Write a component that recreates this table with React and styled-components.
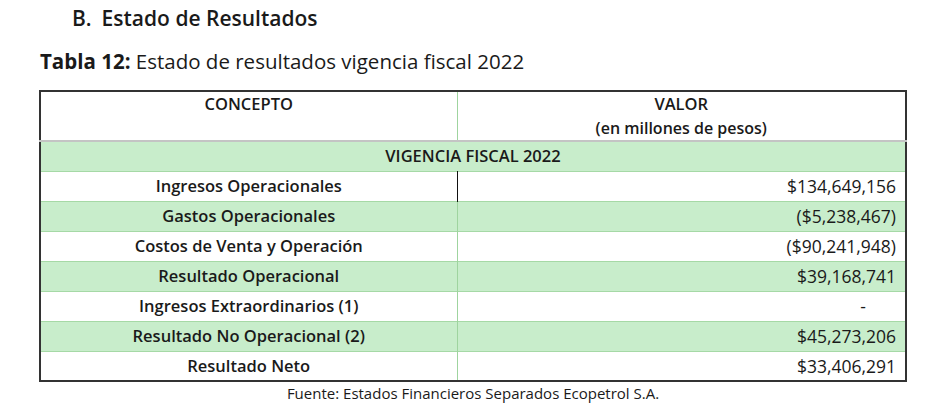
import styled, { createGlobalStyle } from 'styled-components';

const GlobalStyle = createGlobalStyle`
  body {
    margin: 0;
    background: #fff;
    font-family: 'Open Sans', 'Noto Sans', sans-serif;
    color: #1a1a1a;
  }
`;

const Page = styled.div`
  width: 949px;
  height: 416px;
  padding: 4px 0 0 39px;
  box-sizing: border-box;
`;

const Heading = styled.h2`
  margin: 0 0 0 33px;
  font-size: 21px;
  font-weight: 600;
  line-height: 28px;
  display: flex;
  gap: 10px;
`;

const Caption = styled.p`
  margin: 16px 0 0 1px;
  font-size: 20.5px;
  line-height: 27px;
  font-weight: 400;

  b {
    font-weight: 700;
  }
`;

const Table = styled.table`
  margin-top: 15px;
  width: 868px;
  border-collapse: collapse;
  border: 2px solid #333;
  font-size: 16.5px;
  line-height: 20px;

  td, th {
    box-sizing: border-box;
  }
`;

const HeadCell = styled.th`
  height: 47px;
  vertical-align: top;
  padding: 0;
  font-size: 16.5px;
  font-weight: 600;
  line-height: 24px;
  text-align: center;
  border-bottom: 2px solid #c4c4c4;
  border-left: ${p => (p.$split ? '1px solid #9fd49f' : 'none')};
`;

const Sub = styled.span`
  display: block;
  font-size: 16px;
`;

const Row = styled.tr`
  background: ${p => (p.$green ? '#c8edcb' : '#fff')};
  border-bottom: 1px solid #a6d9a6;
`;

const Section = styled.td`
  height: 30px;
  text-align: center;
  font-size: 16.5px;
  font-weight: 600;
  padding: 0;
`;

const Label = styled.td`
  height: 30px;
  width: 417px;
  text-align: center;
  font-weight: 600;
  padding: 0;
`;

const Value = styled.td`
  height: 30px;
  text-align: right;
  padding: 0 9px 0 0;
  font-size: 17.5px;
  font-weight: 400;
  border-left: 1px solid ${p => (p.$dark ? '#111' : '#9fd49f')};
`;

const Dash = styled.span`
  padding-right: 30px;
`;

const Source = styled.p`
  margin: 1px 0 0;
  width: 868px;
  text-align: center;
  font-size: 15px;
  line-height: 20px;
`;

const rows = [
  ['Ingresos Operacionales', '$134,649,156'],
  ['Gastos Operacionales', '($5,238,467)'],
  ['Costos de Venta y Operación', '($90,241,948)'],
  ['Resultado Operacional', '$39,168,741'],
  ['Ingresos Extraordinarios (1)', '-'],
  ['Resultado No Operacional (2)', '$45,273,206'],
  ['Resultado Neto', '$33,406,291'],
];

export default function App() {
  return (
    <Page>
      <GlobalStyle />
      <Heading>
        <span>B.</span>
        <span>Estado de Resultados</span>
      </Heading>
      <Caption>
        <b>Tabla 12:</b> Estado de resultados vigencia fiscal 2022
      </Caption>
      <Table>
        <thead>
          <tr>
            <HeadCell>CONCEPTO</HeadCell>
            <HeadCell $split>
              VALOR
              <Sub>(en millones de pesos)</Sub>
            </HeadCell>
          </tr>
        </thead>
        <tbody>
          <Row $green>
            <Section colSpan={2}>VIGENCIA FISCAL 2022</Section>
          </Row>
          {rows.map(([label, value], i) => (
            <Row key={label} $green={i % 2 === 1}>
              <Label>{label}</Label>
              <Value $dark={i === 0}>{value === '-' ? <Dash>-</Dash> : value}</Value>
            </Row>
          ))}
        </tbody>
      </Table>
      <Source>Fuente: Estados Financieros Separados Ecopetrol S.A.</Source>
    </Page>
  );
}
